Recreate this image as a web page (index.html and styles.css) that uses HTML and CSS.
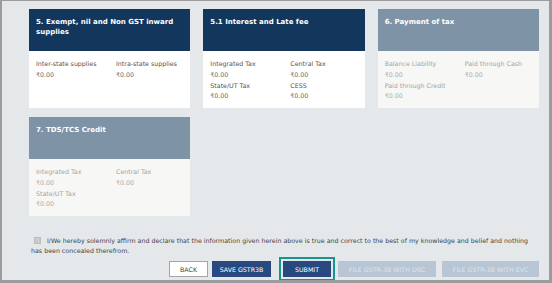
FILE: index.html
```html
<!DOCTYPE html>
<html lang="en">
<head>
    <meta charset="UTF-8">
    <meta name="viewport" content="width=device-width, initial-scale=1.0">
    <title>GSTR-3B Summary</title>
    <link rel="stylesheet" href="styles.css">
</head>
<body>
    <div class="frame">
        <div class="cards">
            <div class="card">
                <div class="card-head">5. Exempt, nil and Non GST inward supplies</div>
                <div class="card-body">
                    <div class="field"><span class="label">Inter-state supplies</span><span class="value">₹0.00</span></div>
                    <div class="field"><span class="label">Intra-state supplies</span><span class="value">₹0.00</span></div>
                </div>
            </div>
            <div class="card">
                <div class="card-head">5.1 Interest and Late fee</div>
                <div class="card-body">
                    <div class="field"><span class="label">Integrated Tax</span><span class="value">₹0.00</span></div>
                    <div class="field"><span class="label">Central Tax</span><span class="value">₹0.00</span></div>
                    <div class="field"><span class="label">State/UT Tax</span><span class="value">₹0.00</span></div>
                    <div class="field"><span class="label">CESS</span><span class="value">₹0.00</span></div>
                </div>
            </div>
            <div class="card disabled">
                <div class="card-head">6. Payment of tax</div>
                <div class="card-body">
                    <div class="field"><span class="label">Balance Liability</span><span class="value">₹0.00</span></div>
                    <div class="field"><span class="label">Paid through Cash</span><span class="value">₹0.00</span></div>
                    <div class="field"><span class="label">Paid through Credit</span><span class="value">₹0.00</span></div>
                </div>
            </div>
            <div class="card disabled">
                <div class="card-head">7. TDS/TCS Credit</div>
                <div class="card-body">
                    <div class="field"><span class="label">Integrated Tax</span><span class="value">₹0.00</span></div>
                    <div class="field"><span class="label">Central Tax</span><span class="value">₹0.00</span></div>
                    <div class="field"><span class="label">State/UT Tax</span><span class="value">₹0.00</span></div>
                </div>
            </div>
        </div>

        <p class="declaration"><span class="checkbox"></span>I/We hereby solemnly affirm and declare that the information given herein above is true and correct to the best of my knowledge and belief and nothing has been concealed therefrom.</p>

        <div class="actions">
            <button class="btn btn-back">BACK</button>
            <button class="btn btn-save">SAVE GSTR3B</button>
            <button class="btn btn-submit">SUBMIT</button>
            <button class="btn btn-dsc" disabled>FILE GSTR-3B WITH DSC</button>
            <button class="btn btn-evc" disabled>FILE GSTR-3B WITH EVC</button>
        </div>
    </div>
</body>
</html>
```

FILE: styles.css
```css
body {
    margin: 0;
    font-family: "DejaVu Sans", Verdana, sans-serif;
}
.frame {
    width: 552px;
    height: 283px;
    box-sizing: border-box;
    border-style: solid;
    border-color: #9b9b9b;
    border-width: 1px 3px 3px 2px;
    background-color: #e4e8eb;
    padding: 8px 10px 0 27px;
    overflow: hidden;
}
.cards {
    display: grid;
    grid-template-columns: repeat(3, 1fr);
    column-gap: 13px;
    row-gap: 9px;
}
.card-head {
    height: 42px;
    box-sizing: border-box;
    padding: 8px 7px;
    background-color: #13365c;
    color: #fff;
    font-size: 7px;
    font-weight: bold;
    line-height: 10px;
}
.card-body {
    height: 57px;
    box-sizing: border-box;
    padding: 8px 7px 0;
    background-color: #fff;
    display: grid;
    grid-template-columns: 80px 1fr;
    align-content: start;
    font-size: 6.3px;
    line-height: 10.8px;
    color: #555;
}
.field {
    display: flex;
    flex-direction: column;
}
.value {
    color: #6a6a6a;
}
.card.disabled .card-head {
    background-color: #7f93a6;
}
.card.disabled .card-body {
    background-color: #f7f7f5;
    color: #a4a4a4;
}
.card.disabled .value {
    color: #ababab;
}
.declaration {
    margin: 20px 0 0 2px;
    font-size: 6.3px;
    line-height: 10px;
    color: #444;
}
.checkbox {
    display: inline-block;
    width: 7px;
    height: 7px;
    box-sizing: border-box;
    margin: 0 6px 0 3px;
    vertical-align: -1px;
    background-color: #cacaca;
    border: 1px solid #bdbdbd;
}
.actions {
    display: flex;
    justify-content: flex-end;
    margin-top: 5px;
}
.btn {
    height: 16px;
    padding: 0;
    border: none;
    font-family: "DejaVu Sans", Verdana, sans-serif;
    font-size: 6.3px;
    color: #fff;
    background-color: #27497f;
    cursor: pointer;
}
.btn-back {
    width: 39px;
    margin-right: 4px;
    background-color: #fff;
    color: #444;
    border: 1px solid #a5a5a5;
}
.btn-save {
    width: 59px;
    margin-right: 12px;
}
.btn-submit {
    width: 48px;
    margin-right: 7px;
    outline: 2px solid #17968f;
    outline-offset: 2px;
}
.btn:disabled {
    background-color: #b8c5d4;
    color: #dfe5ec;
    cursor: not-allowed;
}
.btn-dsc {
    width: 98px;
    margin-right: 6px;
}
.btn-evc {
    width: 97px;
}
```
